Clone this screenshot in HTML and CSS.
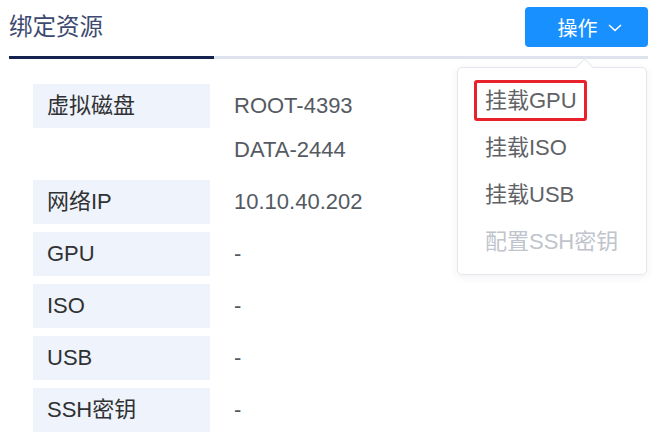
FILE: index.html
```html
<!DOCTYPE html>
<html lang="zh">
<head>
<meta charset="utf-8">
<link rel="stylesheet" href="styles.css">
</head>
<body>
<div class="page">
  <div class="header">
    <div class="title">绑定资源</div>
    <button class="btn">操作<svg class="chev" width="14" height="8" viewBox="0 0 14 8"><path d="M1 1 L7 6.5 L13 1" fill="none" stroke="#fff" stroke-width="1.6"/></svg></button>
  </div>
  <div class="tabline"><div class="tabactive"></div></div>
  <div class="list">
    <div class="row">
      <div class="label">虚拟磁盘</div>
      <div class="values"><div class="val">ROOT-4393</div><div class="val">DATA-2444</div></div>
    </div>
    <div class="row">
      <div class="label">网络IP</div>
      <div class="values"><div class="val">10.10.40.202</div></div>
    </div>
    <div class="row">
      <div class="label">GPU</div>
      <div class="values"><div class="val">-</div></div>
    </div>
    <div class="row">
      <div class="label">ISO</div>
      <div class="values"><div class="val">-</div></div>
    </div>
    <div class="row">
      <div class="label">USB</div>
      <div class="values"><div class="val">-</div></div>
    </div>
    <div class="row">
      <div class="label">SSH密钥</div>
      <div class="values"><div class="val">-</div></div>
    </div>
  </div>
  <div class="menu">
    <div class="arrow"></div>
    <div class="item"><span class="hl">挂载GPU</span></div>
    <div class="item">挂载ISO</div>
    <div class="item">挂载USB</div>
    <div class="item disabled">配置SSH密钥</div>
  </div>
</div>
</body>
</html>
```
FILE: styles.css
```css
* { box-sizing: border-box; }
html, body { margin: 0; padding: 0; background: #fff; }
body { font-family: "Liberation Sans", "Noto Sans CJK SC", sans-serif; width: 662px; height: 446px; overflow: hidden; }
.page { position: relative; width: 662px; height: 446px; padding-top: 7px; }
.header { display: flex; align-items: center; justify-content: space-between; margin: 0 14px 0 9px; height: 40px; }
.title { font-size: 23.5px; color: #3d4a70; line-height: 40px; }
.btn { width: 123px; height: 40px; border: none; border-radius: 4px; background: #1890ff; color: #fff; font-family: inherit; font-size: 20px; display: flex; align-items: center; justify-content: center; gap: 10px; padding: 0 0 0 6px; }
.chev { display: block; margin-top: 1px; }
.tabline { margin: 9px 14px 0 9px; height: 3px; background: #dfe3ee; }
.tabactive { width: 205px; height: 3px; background: #13224f; }
.list { margin: 25px 0 0 33px; display: flex; flex-direction: column; gap: 8px; }
.row { display: flex; }
.label { width: 177px; height: 44px; background: #eff3fb; color: #303133; font-size: 22px; line-height: 44px; padding-left: 14px; }
.values { margin-left: 24px; }
.val { height: 44px; line-height: 44px; font-size: 22px; color: #555a62; }
.menu { position: absolute; left: 457px; top: 67px; width: 190px; height: 208px; background: #fff; border: 1px solid #e4e7ed; border-radius: 5px; box-shadow: 0 2px 10px rgba(0,0,0,0.06); padding: 9px 0; }
.arrow { position: absolute; top: -7px; left: 120px; width: 13px; height: 13px; background: #fff; border-left: 1px solid #e4e7ed; border-top: 1px solid #e4e7ed; transform: rotate(45deg); }
.item { height: 47px; line-height: 47px; padding-left: 27px; font-size: 22px; color: #606266; white-space: nowrap; }
.item.disabled { color: #c0c4cc; }
.hl { display: inline-block; vertical-align: top; margin-top: 3px; line-height: 35px; border: 3px solid #e8212b; border-radius: 3px; padding: 0 7px 0 8px; margin-left: -11px; margin-right: -10px; }
```
